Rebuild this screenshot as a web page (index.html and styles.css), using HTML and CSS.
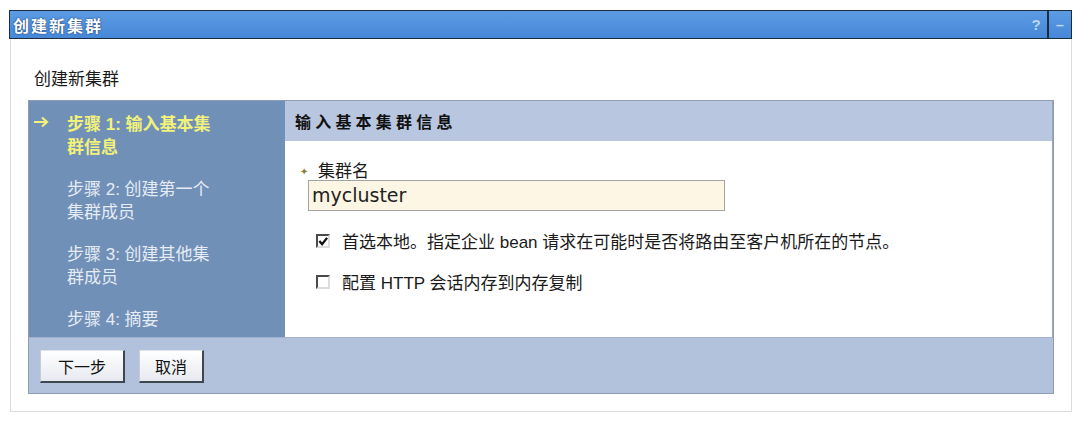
FILE: index.html
```html
<!DOCTYPE html>
<html lang="zh-CN">
<head>
<meta charset="utf-8">
<title>创建新集群</title>
<link rel="stylesheet" href="styles.css">
</head>
<body>
<div class="portlet">
  <div class="titlebar">
    <div class="title">创建新集群</div>
    <div class="tb-help">?</div>
    <div class="tb-sep"></div>
    <div class="tb-min">–</div>
  </div>
  <div class="pbody">
    <div class="page-heading">创建新集群</div>
    <div class="wizard">
      <div class="nav">
        <div class="step current">
          <span class="arrow"><svg width="16" height="12" viewBox="0 0 16 12"><path d="M1 6H14M9 1.5L14 6L9 10.5" fill="none" stroke="#f2f27a" stroke-width="2.2"/></svg></span>
          <span class="step-text">步骤 1: 输入基本集<br>群信息</span>
        </div>
        <div class="step">
          <span class="arrow"></span>
          <span class="step-text">步骤 2: 创建第一个<br>集群成员</span>
        </div>
        <div class="step">
          <span class="arrow"></span>
          <span class="step-text">步骤 3: 创建其他集<br>群成员</span>
        </div>
        <div class="step">
          <span class="arrow"></span>
          <span class="step-text">步骤 4: 摘要</span>
        </div>
      </div>
      <div class="content">
        <div class="content-head">输入基本集群信息</div>
        <div class="content-body">
          <div class="field-label"><span class="req">✦</span>集群名</div>
          <div class="text-input">mycluster</div>
          <div class="check-row first">
            <span class="cbox"><svg width="11" height="11" viewBox="0 0 11 11"><path d="M1.5 5L4.5 8.5L10 1.5" fill="none" stroke="#111" stroke-width="2.6"/></svg></span>
            <span>首选本地。指定企业 bean 请求在可能时是否将路由至客户机所在的节点。</span>
          </div>
          <div class="check-row">
            <span class="cbox"></span>
            <span>配置 HTTP 会话内存到内存复制</span>
          </div>
        </div>
      </div>
      <div class="footer">
        <button class="btn btn-next">下一步</button>
        <button class="btn btn-cancel">取消</button>
      </div>
    </div>
  </div>
</div>
</body>
</html>
```

FILE: styles.css
```css
html, body {
  margin: 0;
  background: #ffffff;
}
body {
  font-family: "Liberation Sans", "Noto Sans CJK SC", sans-serif;
  color: #1a1a1a;
}
.portlet {
  margin: 10px 0 0 9px;
  width: 1063px;
}
.titlebar {
  height: 29px;
  box-sizing: border-box;
  border: 1px solid #1d2c3c;
  background: linear-gradient(#5c9ce3, #4687d8);
  display: flex;
  align-items: center;
}
.title {
  flex: 1;
  padding-left: 3px;
  color: #ffffff;
  font-weight: bold;
  font-size: 16px;
  letter-spacing: 2px;
  text-shadow: 0 0 2px #1b3558;
}
.tb-help {
  width: 14px;
  margin-right: 4px;
  color: #bcd6f3;
  font-weight: bold;
  font-size: 15px;
  text-align: center;
}
.tb-sep {
  width: 2px;
  align-self: stretch;
  background: #1d2c3c;
}
.tb-min {
  width: 22px;
  color: #bcd6f3;
  font-weight: bold;
  font-size: 14px;
  text-align: center;
}
.pbody {
  margin-left: 1px;
  width: 1062px;
  height: 373px;
  box-sizing: border-box;
  border: 1px solid #dcdcdc;
  border-top: 0;
  padding: 31px 0 0 17px;
}
.page-heading {
  font-size: 17px;
  line-height: 20px;
  margin-bottom: 10px;
  padding-left: 6px;
}
.wizard {
  width: 1026px;
  height: 294px;
  box-sizing: border-box;
  border: 1px solid #8e9cb4;
  display: grid;
  grid-template-columns: 256px 1fr;
  grid-template-rows: 236px 1fr;
}
.nav {
  background: #7090b8;
  padding: 12px 0 0 4px;
}
.step {
  display: flex;
  margin-bottom: 19px;
  font-size: 17px;
  line-height: 23px;
  color: #e6ecf4;
}
.step.current {
  color: #f2f27a;
  font-weight: bold;
}
.arrow {
  width: 34px;
  flex: none;
  padding-top: 3px;
}
.arrow svg {
  display: block;
}
.content {
  background: #ffffff;
  border-right: 1px solid #9aa4b4;
}
.content-head {
  height: 40px;
  box-sizing: border-box;
  background: #b8c6e0;
  padding-left: 10px;
  display: flex;
  align-items: center;
  font-weight: bold;
  font-size: 16px;
  letter-spacing: 4.2px;
  color: #111;
}
.content-body {
  padding: 22px 0 0 15px;
}
.field-label {
  font-size: 17px;
  line-height: 18px;
  display: flex;
  align-items: center;
}
.req {
  color: #8b7a2e;
  font-size: 10px;
  width: 18px;
}
.text-input {
  margin: -1px 0 0 8px;
  width: 417px;
  height: 31px;
  box-sizing: border-box;
  border: 1px solid #a4a4a4;
  background: #fdf6e4;
  font-family: "DejaVu Sans", sans-serif;
  font-size: 19px;
  line-height: 29px;
  padding-left: 3px;
  color: #222;
}
.check-row {
  display: flex;
  align-items: center;
  margin: 19px 0 0 16px;
  font-size: 17px;
  line-height: 22px;
  gap: 12px;
}
.check-row.first {
  margin-top: 21px;
}
.cbox {
  width: 14px;
  height: 14px;
  flex: none;
  box-sizing: border-box;
  border: 2px solid;
  border-color: #4a4a4a #dcdcdc #dcdcdc #4a4a4a;
  background: #fff;
  display: flex;
  align-items: center;
  justify-content: center;
  margin-top: -4px;
}
.cbox svg {
  display: block;
}
.footer {
  grid-column: 1 / 3;
  background: #b3c2dc;
  border-top: 1px solid #a3b2cc;
  padding: 12px 0 0 11px;
  display: flex;
  align-items: flex-start;
  gap: 14px;
}
.btn {
  height: 33px;
  box-sizing: border-box;
  background: linear-gradient(#ffffff, #e6e9ef);
  border: 1px solid;
  border-color: #dfe3ea #3e4650 #3e4650 #c4ccd8;
  border-width: 1px 2px 2px 1px;
  font-family: "Liberation Sans", "Noto Sans CJK SC", sans-serif;
  font-size: 16px;
  color: #111;
  padding: 0;
}
.btn-next {
  width: 85px;
}
.btn-cancel {
  width: 65px;
}
```
